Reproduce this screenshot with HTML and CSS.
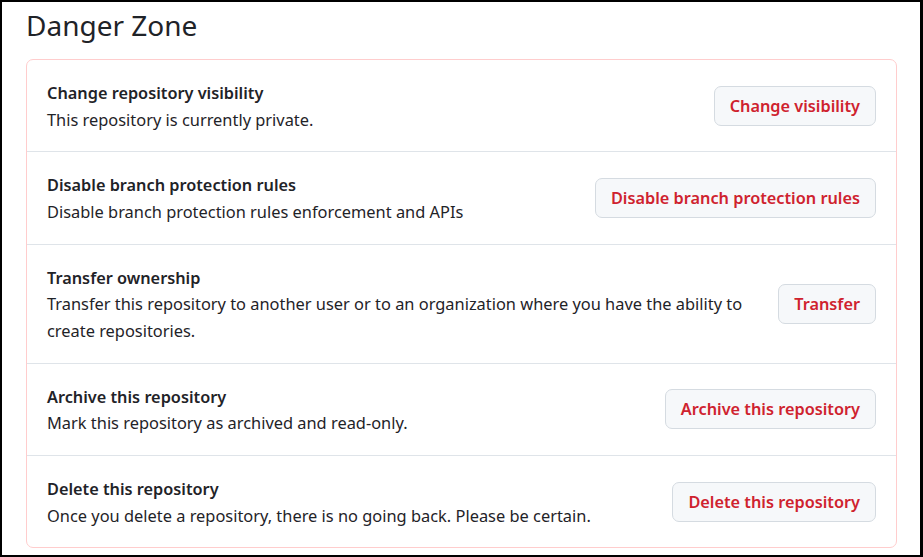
FILE: index.html
```html
<!DOCTYPE html>
<html lang="en">
<head>
<meta charset="utf-8">
<title>Danger Zone</title>
<link rel="stylesheet" href="styles.css">
</head>
<body>
<div class="frame">
  <h2 class="subhead">Danger Zone</h2>
  <div class="danger-box">
    <div class="row">
      <div class="row-text">
        <div class="row-title">Change repository visibility</div>
        <div class="row-desc">This repository is currently private.</div>
      </div>
      <button class="btn-danger" type="button">Change visibility</button>
    </div>
    <div class="row">
      <div class="row-text">
        <div class="row-title">Disable branch protection rules</div>
        <div class="row-desc">Disable branch protection rules enforcement and APIs</div>
      </div>
      <button class="btn-danger" type="button">Disable branch protection rules</button>
    </div>
    <div class="row">
      <div class="row-text">
        <div class="row-title">Transfer ownership</div>
        <div class="row-desc">Transfer this repository to another user or to an organization where you have the ability to create repositories.</div>
      </div>
      <button class="btn-danger" type="button">Transfer</button>
    </div>
    <div class="row">
      <div class="row-text">
        <div class="row-title">Archive this repository</div>
        <div class="row-desc">Mark this repository as archived and read-only.</div>
      </div>
      <button class="btn-danger" type="button">Archive this repository</button>
    </div>
    <div class="row">
      <div class="row-text">
        <div class="row-title">Delete this repository</div>
        <div class="row-desc">Once you delete a repository, there is no going back. Please be certain.</div>
      </div>
      <button class="btn-danger" type="button">Delete this repository</button>
    </div>
  </div>
</div>
</body>
</html>
```

FILE: styles.css
```css
html, body {
  margin: 0;
  padding: 0;
  background: #000;
}

body {
  font-family: "Noto Sans", "Open Sans", sans-serif;
  color: #1f2328;
}

.frame {
  box-sizing: border-box;
  width: 923px;
  height: 557px;
  background: #fff;
  border-style: solid;
  border-color: #000;
  border-width: 2px 3px 2px 2px;
  padding: 6px 23px 0 24px;
}

.subhead {
  margin: 0 0 16px 0;
  font-size: 28px;
  line-height: 35px;
  font-weight: 400;
  color: #1f2328;
}

.danger-box {
  border: 1px solid #ffcdcd;
  border-radius: 7px;
}

.row {
  display: flex;
  align-items: center;
  gap: 16px;
  padding: 20px 20px 18.4px;
}

.row + .row {
  border-top: 1px solid #dfe4e9;
}

.row-text {
  flex: 1;
  min-width: 0;
}

.row-title {
  font-size: 16.3px;
  line-height: 26.5px;
  font-weight: 600;
}

.row-desc {
  font-size: 16.4px;
  line-height: 26.5px;
  font-weight: 400;
}

.btn-danger {
  flex: none;
  box-sizing: border-box;
  height: 40px;
  margin-bottom: 2px;
  padding: 0 15px;
  display: inline-flex;
  align-items: center;
  font-family: "Noto Sans", "Open Sans", sans-serif;
  font-size: 16.3px;
  font-weight: 600;
  color: #cf222e;
  background: #f6f8fa;
  border: 1px solid #d5dbe1;
  border-radius: 7px;
  cursor: pointer;
}
```
